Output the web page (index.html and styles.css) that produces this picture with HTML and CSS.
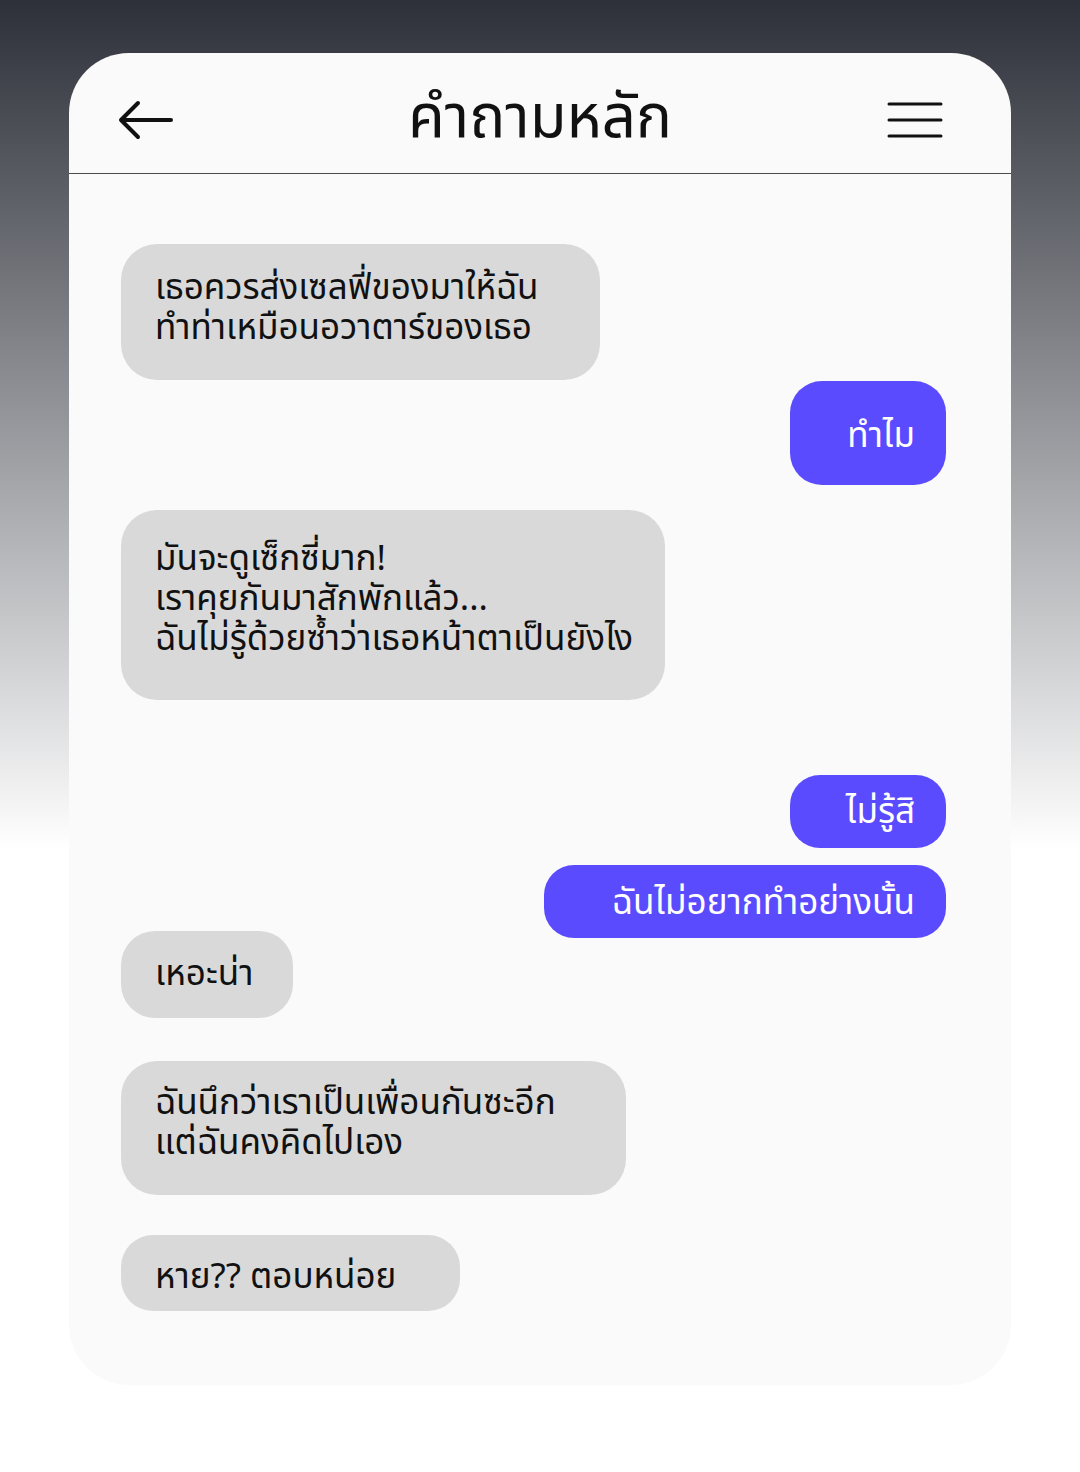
FILE: index.html
```html
<!DOCTYPE html>
<html lang="th">
<head>
<meta charset="utf-8">
<title>คำถามหลัก</title>
<link rel="stylesheet" href="styles.css">
</head>
<body>
<div class="page">
  <div class="phone">
    <header class="topbar">
      <svg class="icon back" viewBox="0 0 60 40" width="60" height="40" aria-label="back">
        <path d="M5 20 H55 M22 3 L5 20 L22 37" fill="none" stroke="#111" stroke-width="4" stroke-linecap="round" stroke-linejoin="round"/>
      </svg>
      <h1 class="title">คำถามหลัก</h1>
      <svg class="icon menu" viewBox="0 0 56 40" width="56" height="40" aria-label="menu">
        <path d="M2 4 H54 M2 20 H54 M2 36 H54" fill="none" stroke="#111" stroke-width="3" stroke-linecap="round"/>
      </svg>
    </header>
    <main class="chat">
      <div class="msg in m1">เธอควรส่งเซลฟี่ของมาให้ฉัน<br>ทำท่าเหมือนอวาตาร์ของเธอ</div>
      <div class="msg out m2">ทำไม</div>
      <div class="msg in m3">มันจะดูเซ็กซี่มาก!<br>เราคุยกันมาสักพักแล้ว...<br>ฉันไม่รู้ด้วยซ้ำว่าเธอหน้าตาเป็นยังไง</div>
      <div class="msg out m4">ไม่รู้สิ</div>
      <div class="msg out m5">ฉันไม่อยากทำอย่างนั้น</div>
      <div class="msg in m6">เหอะน่า</div>
      <div class="msg in m7">ฉันนึกว่าเราเป็นเพื่อนกันซะอีก<br>แต่ฉันคงคิดไปเอง</div>
      <div class="msg in m8">หาย?? ตอบหน่อย</div>
    </main>
  </div>
</div>
</body>
</html>
```

FILE: styles.css
```css
html, body {
  margin: 0;
  padding: 0;
}
body {
  width: 1080px;
  height: 1472px;
  background: linear-gradient(180deg, #2d3039 0px, #ffffff 850px, #ffffff 1472px);
  font-family: "Noto Sans Thai", "Noto Sans", sans-serif;
  color: #111;
}
.page {
  padding: 53px 69px 0 69px;
}
.phone {
  background: #fafafa;
  border-radius: 60px;
  overflow: hidden;
  height: 1332px;
  display: flex;
  flex-direction: column;
}
.topbar {
  height: 120px;
  border-bottom: 1px solid #4a4a4a;
  display: grid;
  grid-template-columns: 1fr auto 1fr;
  align-items: center;
  padding: 0 47px;
}
.icon { display: block; }
.back { margin-top: 14px; justify-self: start; }
.menu { margin-top: 14px; margin-right: 21px; justify-self: end; }
.title {
  margin: 0;
  font-size: 60px;
  font-weight: 400;
  line-height: 1;
  margin-top: 12px;
}
.chat {
  display: flex;
  flex-direction: column;
  padding: 70px 65px 0 52px;
}
.msg {
  box-sizing: border-box;
  font-size: 35px;
  line-height: 40px;
  border-radius: 36px;
}
.in {
  align-self: flex-start;
  background: #d9d9d9;
  padding-left: 34px;
}
.out {
  align-self: flex-end;
  background: #5b4bff;
  color: #fff;
  text-align: right;
  padding-right: 31px;
}
.m1 { width: 479px; height: 136px; padding-top: 25px; }
.m2 { width: 156px; height: 104px; padding-top: 36px; margin-top: 1px; border-radius: 32px; }
.m3 { width: 544px; height: 190px; padding-top: 30px; margin-top: 25px; }
.m4 { width: 156px; height: 73px; padding-top: 18px; margin-top: 75px; border-radius: 30px; }
.m5 { width: 402px; height: 73px; padding-top: 19px; margin-top: 17px; border-radius: 30px; }
.m6 { width: 172px; height: 87px; padding-top: 24px; margin-top: -7px; border-radius: 34px; }
.m7 { width: 505px; height: 134px; padding-top: 23px; margin-top: 43px; }
.m8 { width: 339px; height: 76px; padding-top: 23px; margin-top: 40px; border-radius: 32px; }
```
